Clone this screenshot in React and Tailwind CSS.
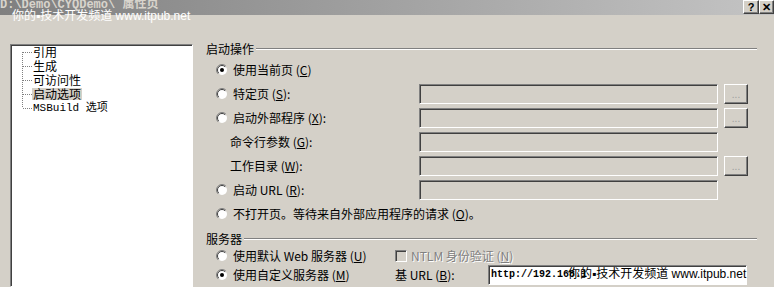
import React from 'react';

const sunken = 'border border-t-[#808080] border-l-[#808080] border-b-white border-r-white shadow-[inset_1px_1px_0_#404040]';
const raised = 'border border-t-white border-l-white border-b-[#404040] border-r-[#404040] shadow-[inset_-1px_-1px_0_#808080]';

const Radio = ({ checked }) => (
    <svg width="12" height="12" viewBox="0 0 12 12" className="shrink-0">
        <circle cx="6" cy="6" r="5" fill="#fff" />
        <path d="M2.1 9.9 A5.5 5.5 0 0 1 9.9 2.1" stroke="#808080" fill="none" />
        <path d="M2.8 9.2 A4.5 4.5 0 0 1 9.2 2.8" stroke="#404040" fill="none" />
        {checked && <circle cx="6" cy="6" r="2" fill="#000" />}
    </svg>
);

const Label = ({ text, k }) => {
    // underline the access key letter inside the brackets
    const i = text.indexOf('(' + k + ')');
    if (i < 0) return <span>{text}</span>;
    return (
        <span className="whitespace-nowrap">
            {text.slice(0, i + 1)}<u>{k}</u>{text.slice(i + 2)}
        </span>
    );
};

const GroupHeader = ({ title, className }) => (
    <div className={`flex items-center h-[11px] pl-[9px] ${className || ''}`}>
        <span className="leading-none whitespace-nowrap pr-[2px]">{title}</span>
        <div className="flex-1 mr-[17px] h-[2px] border-t border-t-[#808080] border-b border-b-white" />
    </div>
);

const rows = [
    { radio: true, checked: true, text: '使用当前页 (C)', k: 'C' },
    { radio: true, text: '特定页 (S):', k: 'S', box: true, btn: true },
    { radio: true, text: '启动外部程序 (X):', k: 'X', box: true, btn: true },
    { text: '命令行参数 (G):', k: 'G', box: true },
    { text: '工作目录 (W):', k: 'W', box: true, btn: true },
    { radio: true, text: '启动 URL (R):', k: 'R', box: true },
    { radio: true, text: '不打开页。等待来自外部应用程序的请求 (O)。', k: 'O' },
];

const treeItems = ['引用', '生成', '可访问性', '启动选项', 'MSBuild 选项'];

export default function App() {
    return (
        <div className="relative w-[774px] h-[287px] overflow-hidden bg-[#d4d0c8] text-black text-[12px] font-['Noto_Sans_CJK_SC',sans-serif]">
            {/* title bar (inactive) */}
            <div className="flex items-start h-[15px] bg-gradient-to-r from-[#808080] to-[#c4c4c4]">
                <span className="-mt-[1px] leading-[13px] font-bold text-[#d8d4cc] whitespace-nowrap font-['Liberation_Mono','Noto_Sans_CJK_SC',monospace]">
                    D:\Demo\CYQDemo\ 属性页
                </span>
                <div className="ml-auto flex">
                    <div className={`w-[16px] h-[14px] bg-[#d4d0c8] flex items-center justify-center font-bold text-[11px] leading-none font-['Liberation_Sans',sans-serif] ${raised}`}>?</div>
                    <div className={`w-[15px] h-[14px] bg-[#d4d0c8] flex items-center justify-center font-bold text-[11px] leading-none font-['Liberation_Sans',sans-serif] ${raised}`}>✕</div>
                </div>
            </div>

            <div className="flex pt-[29px] pl-[10px]">
                {/* tree */}
                <div className={`relative w-[183px] h-[243px] bg-white ${sunken}`}>
                    <svg className="absolute left-0 top-0" width="40" height="80">
                        <line x1="11.5" y1="7" x2="11.5" y2="63" stroke="#808080" strokeDasharray="1 1" />
                        {treeItems.map((_, i) => (
                            <line key={i} x1="12" y1={7.5 + i * 14} x2="21" y2={7.5 + i * 14} stroke="#808080" strokeDasharray="1 1" />
                        ))}
                    </svg>
                    <div className="pl-[21px]">
                        {treeItems.map((t, i) => (
                            <div key={t} className="h-[14px] flex items-center">
                                <span className={`leading-[12px] px-[1px] whitespace-nowrap ${i === 3 ? 'bg-[#d4d0c8]' : ''} ${i === 4 ? "font-['Liberation_Mono','Noto_Sans_CJK_SC',monospace] text-[11px]" : ''}`}>
                                    {t}
                                </span>
                            </div>
                        ))}
                    </div>
                </div>

                {/* settings */}
                <div className="flex-1 pl-[4px] -mt-[1px]">
                    <GroupHeader title="启动操作" className="mb-[4px]" />
                    {rows.map((r) => (
                        <div key={r.text} className="flex items-center h-6">
                            <div className={`flex items-center w-[222px] shrink-0 ${r.radio ? 'pl-[19px]' : 'pl-[33px]'}`}>
                                {r.radio && <Radio checked={r.checked} />}
                                <span className={r.radio ? 'ml-[5px]' : ''}>
                                    <Label text={r.text} k={r.k} />
                                </span>
                            </div>
                            {r.box && <div className={`w-[299px] h-5 shrink-0 bg-[#d4d0c8] ${sunken}`} />}
                            {r.btn && (
                                <div className={`ml-[6px] w-[24px] h-[20px] bg-[#d4d0c8] flex items-center justify-center text-[10px] leading-none text-[#a0a0a0] ${raised}`}>
                                    ...
                                </div>
                            )}
                        </div>
                    ))}

                    <GroupHeader title="服务器" className="mt-[7px] mb-[2px]" />
                    <div className="flex items-center h-[19px] pl-[19px]">
                        <div className="flex items-center w-[179px] shrink-0">
                            <Radio />
                            <span className="ml-[5px]"><Label text="使用默认 Web 服务器 (U)" k="U" /></span>
                        </div>
                        <div className="flex items-center text-[#808080] [text-shadow:1px_1px_0_#fff]">
                            <div className={`w-[12px] h-[12px] bg-[#d4d0c8] ${sunken}`} />
                            <span className="ml-[4px]"><Label text="NTLM 身份验证 (N)" k="N" /></span>
                        </div>
                    </div>
                    <div className="flex items-center h-[19px] pl-[19px]">
                        <div className="flex items-center w-[179px] shrink-0">
                            <Radio checked />
                            <span className="ml-[5px]"><Label text="使用自定义服务器 (M)" k="M" /></span>
                        </div>
                        <div className="w-[93px] shrink-0"><Label text="基 URL (B):" k="B" /></div>
                        <div className={`w-[259px] h-[20px] shrink-0 bg-white flex items-center pl-[2px] font-['Liberation_Mono',monospace] text-[10px] font-bold ${sunken}`}>
                            http://192.168.1
                        </div>
                    </div>
                </div>
            </div>

            {/* site watermarks over the picture */}
            <div className="absolute left-[12px] top-[9px] text-white text-[12px] leading-[14px] whitespace-nowrap font-['Liberation_Sans','Noto_Sans_CJK_SC',sans-serif]">
                你的▪技术开发频道 www.itpub.net
            </div>
            <div className="absolute left-[568px] top-[267px] text-black text-[12px] leading-[14px] whitespace-nowrap font-['Liberation_Sans','Noto_Sans_CJK_SC',sans-serif]">
                你的▪技术开发频道 www.itpub.net
            </div>
        </div>
    );
}
